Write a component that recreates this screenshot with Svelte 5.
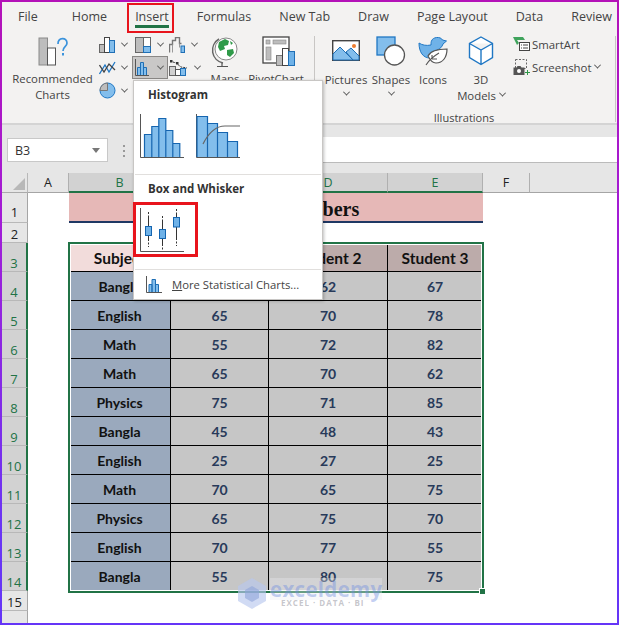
<script>
	const tabs = ['File', 'Home', 'Insert', 'Formulas', 'New Tab', 'Draw', 'Page Layout', 'Data', 'Review'];
	const columns = ['A', 'B', 'C', 'D', 'E', 'F'];
	const students = ['Student 1', 'Student 2', 'Student 3'];
	const marks = [
		['Bangla', 48, 62, 67],
		['English', 65, 70, 78],
		['Math', 55, 72, 82],
		['Math', 65, 70, 62],
		['Physics', 75, 71, 85],
		['Bangla', 45, 48, 43],
		['English', 25, 27, 25],
		['Math', 70, 65, 75],
		['Physics', 65, 75, 70],
		['English', 70, 77, 55],
		['Bangla', 55, 80, 75]
	];
</script>

<div class="frame">
	<nav class="tabs">
		{#each tabs as tab}
			<span class="tab" class:active={tab === 'Insert'}>{tab}</span>
		{/each}
	</nav>

	<section class="ribbon">
		<div class="big recommended">
			<svg width="32" height="30" viewBox="0 0 32 30">
				<rect x="1" y="1" width="8.5" height="27" fill="#bdbdbd" stroke="#8a8a8a" />
				<rect x="9.5" y="11" width="8" height="17" fill="#fff" stroke="#555" />
				<path d="M20 7c0-7 9-7 9-1 0 4-4 3.500-4 8" fill="none" stroke="#3b93dc" stroke-width="1.700" />
				<rect x="24" y="16" width="2" height="2.500" fill="#3b93dc" />
			</svg>
			<span class="label first">Recommended<br />Charts</span>
		</div>

		<div class="chart-grid">
			<div class="cell">
				<svg width="17" height="16" viewBox="0 0 17 16">
					<rect x="0.500" y="7.500" width="5" height="8" fill="#bdbdbd" stroke="#666" />
					<rect x="5.500" y="0.500" width="5" height="15" fill="#fff" stroke="#444" />
					<rect x="10.500" y="3.500" width="5" height="12" fill="#83beec" stroke="#1f6fb5" />
				</svg>
				<i class="chev"></i>
			</div>
			<div class="cell mid">
				<svg width="17" height="16" viewBox="0 0 17 16">
					<rect x="0.500" y="0.500" width="8" height="15" fill="#bdbdbd" stroke="#666" />
					<rect x="8.500" y="0.500" width="7" height="9" fill="#fff" stroke="#666" />
					<rect x="8.500" y="9.500" width="7" height="6" fill="#83beec" stroke="#1f6fb5" />
				</svg>
				<i class="chev"></i>
			</div>
			<div class="cell">
				<svg width="17" height="16" viewBox="0 0 17 16">
					<path d="M0.500 15.500v-8h3v-4h3v-3h4v6h2" fill="none" stroke="#777" stroke-width="1.400" />
					<path d="M3.500 15.500v-8M10.500 6.500v4" fill="none" stroke="#999" />
					<rect x="12" y="9" width="3.500" height="6.500" fill="#83beec" stroke="#1f6fb5" />
				</svg>
				<i class="chev"></i>
			</div>
			<div class="cell">
				<svg width="17" height="16" viewBox="0 0 17 16">
					<path d="M0.500 14 6 5l4 7 6-10" fill="none" stroke="#1f77c4" stroke-width="1.300" />
					<path d="M0.500 5 5 12l5-8 6 6" fill="none" stroke="#444" stroke-width="1.300" />
				</svg>
				<i class="chev"></i>
			</div>
			<div class="cell hover">
				<svg width="14" height="17" viewBox="0 0 14 17">
					<path d="M0.500 0v16.500H14" fill="none" stroke="#555" />
					<path d="M2.500 16V8.500h3V16M5.500 16V3.500h3V16M8.500 16V8.500h3V16" fill="#83beec" stroke="#1f6fb5" />
				</svg>
				<i class="chev"></i>
			</div>
			<div class="cell">
				<svg width="20" height="17" viewBox="0 0 20 17">
					<path d="M1 2l6 2 5 4 6 1" fill="none" stroke="#333" stroke-dasharray="2 1" />
					<rect x="1" y="1" width="2.500" height="2.500" fill="#333" />
					<rect x="7" y="3" width="2.500" height="2.500" fill="#333" />
					<rect x="0.500" y="7.500" width="6" height="9" fill="#d0d0d0" stroke="#666" />
					<rect x="6.500" y="10.500" width="5" height="6" fill="#fff" stroke="#555" />
					<rect x="11.500" y="9.500" width="5" height="7" fill="#83beec" stroke="#1f6fb5" />
				</svg>
				<i class="chev"></i>
			</div>
			<div class="cell">
				<svg width="17" height="17" viewBox="0 0 17 17">
					<circle cx="8.500" cy="8.500" r="7.500" fill="#83beec" stroke="#1f77c4" />
					<path d="M8.500 8.500V1A7.500 7.500 0 0 0 1 8.500z" fill="#bdbdbd" stroke="#777" />
				</svg>
				<i class="chev"></i>
			</div>
		</div>

		<div class="big maps">
			<svg width="28" height="31" viewBox="0 0 28 31">
				<path d="M8 3a13 13 0 0 0 4 24" fill="none" stroke="#666" stroke-width="1.500" />
				<path d="M11 27v3M6 30.500h11" stroke="#555" fill="none" stroke-width="1.200" />
				<circle cx="15" cy="13" r="11" fill="#fff" stroke="#888" />
				<path d="M8 6l6-3 4 2-1 4-4 1 1 3-5 2-2-4zM16 14l6-1 1 4-4 4-3-2zM19 5l3 2-2 2z" fill="#2f9a49" />
			</svg>
			<span class="label">Maps</span>
		</div>

		<div class="big pivot">
			<svg width="36" height="31" viewBox="0 0 36 31">
				<rect x="1" y="1" width="26" height="26" fill="#fff" stroke="#444" stroke-width="1.300" />
				<rect x="4" y="4" width="4" height="4" fill="#bdbdbd" stroke="#888" stroke-width="0.600" />
				<rect x="11" y="4" width="13" height="4" fill="#bdbdbd" stroke="#888" stroke-width="0.600" />
				<rect x="4" y="11" width="5" height="13" fill="#bdbdbd" stroke="#888" stroke-width="0.600" />
				<rect x="14.500" y="19.500" width="6" height="10" fill="#bdbdbd" stroke="#777" />
				<rect x="20.500" y="12.500" width="6" height="17" fill="#fff" stroke="#444" />
				<rect x="26.500" y="15.500" width="6" height="14" fill="#6fb2e8" stroke="#1f6fb5" />
			</svg>
			<span class="label">PivotChart</span>
		</div>

		<div class="sep"></div>

		<div class="illustrations">
			<div class="items">
				<div class="big pictures">
					<svg width="28" height="21" viewBox="0 0 28 21">
						<rect x="0.700" y="0.700" width="26.600" height="19.600" fill="#fff" stroke="#444" stroke-width="1.400" />
						<path d="M1 20V14l7-7 13 13z" fill="#83beec" stroke="#1f6fb5" />
						<path d="M14 12l5-4 8 8v4h-6z" fill="#83beec" stroke="#1f6fb5" />
						<circle cx="22" cy="6" r="2" fill="#ed7d31" />
					</svg>
					<span class="label">Pictures</span>
					<i class="chev"></i>
				</div>
				<div class="big shapes">
					<svg width="30" height="30" viewBox="0 0 30 30">
						<rect x="1" y="1" width="18" height="18" fill="#83beec" stroke="#1f77c4" stroke-width="1.300" />
						<circle cx="18.500" cy="19" r="10" fill="#fff" stroke="#555" stroke-width="1.300" />
					</svg>
					<span class="label">Shapes</span>
					<i class="chev"></i>
				</div>
				<div class="big icons">
					<svg width="30" height="30" viewBox="0 0 30 30">
						<path d="M1 7c3 2 7 3 12 2 0-2 0-3 .5-4 1-4 9-5 11-1l4 1-3.500 3c-1 3-3 5-6 6L12 22C5 22 1 16 1 7z" fill="#6fb2e8" stroke="#1f77c4" />
						<path d="M10 20c2-4 8-7 19-7 0 8-4 14-11 14-3 0-6-3-8-7z" fill="#fff" stroke="#555" stroke-width="1.200" />
						<path d="M8 29c3-5 8-9 13-12M14 23v-4M14 23h5" fill="none" stroke="#555" stroke-width="1.100" />
					</svg>
					<span class="label">Icons</span>
				</div>
				<div class="big models">
					<svg width="26" height="30" viewBox="0 0 26 30">
						<path d="M13 1l11.500 6.500v14L13 28.500 1.500 21.500v-14zM1.500 7.500 13 14l11.500-6.500M13 14v14.500" fill="#fff" stroke="#1f77c4" stroke-width="1.400" />
					</svg>
					<span class="label">3D<br />Models <i class="chev inline"></i></span>
				</div>
				<div class="stack">
					<div class="line">
						<svg width="17" height="14" viewBox="0 0 17 14">
							<path d="M0 0h10l2 3H4l2 3-2 2z" fill="#3fa35c" />
							<rect x="6.500" y="5.500" width="10" height="8" fill="#fff" stroke="#444" />
							<path d="M8 8h1M10 8h5M8 11h1M10 11h5" stroke="#444" />
						</svg>
						<span>SmartArt</span>
					</div>
					<div class="line">
						<svg width="17" height="17" viewBox="0 0 17 17">
							<rect x="2.500" y="0.500" width="11" height="9" fill="none" stroke="#666" stroke-dasharray="2 1.500" />
							<path d="M0.500 8.500h3l1-1.500h3l1 1.500h3v7.500h-11z" fill="#555" />
							<circle cx="6" cy="12" r="2" fill="#fff" />
							<path d="M14.500 11v5M12 13.500h5" stroke="#2f9a49" />
						</svg>
						<span>Screenshot <i class="chev inline"></i></span>
					</div>
				</div>
			</div>
			<span class="group-name">Illustrations</span>
		</div>

		<div class="sep last"></div>
	</section>

	<section class="formula">
		<div class="name-box">
			<span>B3</span>
			<i class="caret"></i>
		</div>
		<div class="dots"><i></i><i></i><i></i></div>
		<div class="input"></div>
	</section>

	<section class="sheet">
		<div class="corner"><i></i></div>
		{#each columns as col}
			<div class="col-head" class:picked={col !== 'A' && col !== 'F'}>{col}</div>
		{/each}
		<div class="col-head rest"></div>

		<div class="row-head top">1</div>
		<div class="blank"></div>
		<div class="title">Students’ Numbers</div>
		<div class="blank wide"></div>

		<div class="row-head">2</div>
		<div class="blank full"></div>

		<div class="row-head picked">3</div>
		<div class="blank"></div>
		<div class="cell-h subject">Subject</div>
		{#each students as s}
			<div class="cell-h student">{s}</div>
		{/each}
		<div class="blank wide"></div>

		{#each marks as row, i}
			<div class="row-head picked">{i + 4}</div>
			<div class="blank"></div>
			<div class="cell-d name">{row[0]}</div>
			<div class="cell-d">{row[1]}</div>
			<div class="cell-d">{row[2]}</div>
			<div class="cell-d">{row[3]}</div>
			<div class="blank wide"></div>
		{/each}

		<div class="row-head">15</div>
		<div class="blank full"></div>
		<div class="row-head tail"></div>
		<div class="blank full"></div>

		<div class="selection"><i></i></div>
	</section>

	<div class="popup">
		<h4>Histogram</h4>
		<div class="thumbs">
			<svg width="45" height="45" viewBox="0 0 45 45">
				<path d="M0.500 0v43.500H44" fill="none" stroke="#555" />
				<path d="M4.500 43V20.500h7.300V43M11.800 43V12.500h7V43M18.800 43V4.500h7V43M25.800 43V16.500h7V43M32.800 43V29.500h7V43" fill="#83beec" stroke="#1565b0" stroke-width="1.200" />
			</svg>
			<svg width="45" height="45" viewBox="0 0 45 45">
				<path d="M0.500 0v43.500H44" fill="none" stroke="#555" />
				<path d="M1 43V2.500h10.500V43M11.500 43V9.500h10V43M21.500 43V18.500h10V43M31.500 43V27.500h10V43" fill="#83beec" stroke="#1565b0" stroke-width="1.200" />
				<path d="M7 30c5-10 12-18 22-18h15" fill="none" stroke="#666" stroke-width="1.200" />
			</svg>
		</div>
		<hr />
		<h4>Box and Whisker</h4>
		<div class="whisker">
			<svg width="45" height="45" viewBox="0 0 45 45">
				<path d="M0.500 0v43.500H44" fill="none" stroke="#555" />
				<g fill="none" stroke="#333">
					<path d="M8.500 4v5M22.500 8v5M36.500 1v4" stroke-dasharray="2 1.500" />
					<path d="M8.500 9v9M8.500 27v4M22.500 13v8M22.500 30v6M36.500 5v4M36.500 19v11" />
					<path d="M8.500 31v8M22.500 36v7M36.500 30v8" stroke-dasharray="2 1.500" />
				</g>
				<g fill="#6fb2e8" stroke="#1565b0">
					<rect x="5.500" y="18.500" width="6" height="9" />
					<rect x="19.500" y="21.500" width="6" height="9" />
					<rect x="33.500" y="9.500" width="6" height="9.500" />
				</g>
			</svg>
		</div>
		<hr class="lower" />
		<div class="more">
			<svg width="16" height="17" viewBox="0 0 16 17">
				<path d="M0.500 0v16.500H16" fill="none" stroke="#555" />
				<path d="M3 16V8.500h3V16M6 16V3.500h3.500V16M9.500 16V8.500h3V16" fill="#83beec" stroke="#1f6fb5" />
			</svg>
			<span><u>M</u>ore Statistical Charts...</span>
		</div>
	</div>

	<div class="watermark">
		<svg width="28" height="31" viewBox="0 0 28 31">
			<path d="M14 0l14 8v15l-14 8-14-8V8z" fill="#b8c8ee" opacity="0.650" />
			<path d="M14 8l7 4v8l-7 4-7-4v-8z" fill="#8da4d8" opacity="0.600" />
		</svg>
		<div class="wm-text">
			<span class="wm-name">exceldemy</span>
			<span class="wm-sub">EXCEL · DATA · BI</span>
		</div>
	</div>
</div>

<style>
	:global(body) {
		margin: 0;
	}

	.frame {
		position: relative;
		width: 619px;
		height: 625px;
		box-sizing: border-box;
		border: 2px solid;
		border-image: linear-gradient(180deg, #b412b8 0%, #a31cd6 35%, #6a35f5 85%, #6535f7 100%) 1;
		background: #fff;
		overflow: hidden;
		display: flex;
		flex-direction: column;
		font-family: 'Open Sans', 'Liberation Sans', sans-serif;
		color: #444;
	}

	.tabs {
		position: relative;
		z-index: 1;
		display: flex;
		gap: 28px;
		height: 28px;
		padding: 0 0 0 16px;
		background: #f3f2f1;
		align-items: center;
		font-size: 12.500px;
		flex: none;
	}

	.tab {
		position: relative;
		color: #444;
		white-space: nowrap;
	}

	.tab:first-child {
		margin-right: 6px;
	}

	.tab.active::before {
		content: '';
		position: absolute;
		left: -8px;
		right: -5px;
		top: -5px;
		bottom: -8px;
		border: 2.500px solid #e8141c;
	}

	.tab.active::after {
		content: '';
		position: absolute;
		left: 0;
		right: 0;
		bottom: -3px;
		height: 2.500px;
		background: #217346;
	}

	.ribbon {
		display: flex;
		height: 95px;
		flex: none;
		box-sizing: border-box;
		background: #f3f2f1;
		border-bottom: 2px solid #d4d4d4;
		font-size: 11.400px;
		padding-top: 6px;
	}

	.big {
		display: flex;
		flex-direction: column;
		align-items: center;
		flex: none;
	}

	.label {
		display: block;
		text-align: center;
		line-height: 16px;
		white-space: nowrap;
	}

	.recommended {
		width: 85px;
		margin-left: 8px;
	}

	.recommended svg {
		margin: 1px 0 4px 3px;
	}

	.chart-grid {
		display: grid;
		grid-template-columns: 34px 36px 36px;
		grid-auto-rows: 23px;
		margin: -3px 0 0 3px;
		flex: none;
	}

	.cell {
		display: flex;
		align-items: center;
		gap: 4px;
		padding-left: 1px;
		height: 23px;
		box-sizing: border-box;
	}

	.cell.mid {
		padding-left: 3px;
	}

	.cell.hover {
		background: #c9c8c7;
		border: 1px solid #8a8886;
		padding-left: 2px;
		gap: 7px;
	}

	.chev {
		display: inline-block;
		width: 4px;
		height: 4px;
		border-right: 1.200px solid #555;
		border-bottom: 1.200px solid #555;
		transform: rotate(45deg) translate(-1px, -1px);
		margin-left: 2px;
		flex: none;
	}

	.chev.inline {
		vertical-align: 3px;
		margin-left: 1px;
	}

	.maps {
		width: 36px;
		margin-left: 3px;
	}

	.maps svg,
	.pivot svg {
		margin-bottom: 4px;
		flex: none;
	}

	.pivot {
		width: 56px;
		margin-left: 5px;
	}

	.pivot svg {
		margin-left: 8px;
	}

	.sep {
		width: 1px;
		height: 86px;
		background: #c8c6c4;
		margin-left: 10px;
		flex: none;
	}

	.sep.last {
		margin-left: 1px;
	}

	.illustrations {
		display: flex;
		flex-direction: column;
		width: 288px;
		flex: none;
		margin-left: 11px;
	}

	.items {
		display: flex;
		height: 75px;
		flex: none;
	}

	.pictures {
		width: 40px;
	}

	.pictures svg {
		margin: 4px 0 11px;
	}

	.pictures .chev,
	.shapes .chev {
		margin: 3px 0 0;
	}

	.shapes {
		width: 38px;
		margin-left: 6px;
	}

	.shapes svg,
	.icons svg,
	.models svg {
		margin-bottom: 6px;
	}

	.icons {
		width: 32px;
		margin-left: 7px;
	}

	.models {
		width: 50px;
		margin-left: 7px;
	}

	.stack {
		display: flex;
		flex-direction: column;
		gap: 7px;
		margin-left: 7px;
	}

	.line {
		display: flex;
		align-items: center;
		gap: 2px;
		height: 16px;
		white-space: nowrap;
	}

	.group-name {
		text-align: center;
		font-size: 11px;
		line-height: 14px;
		width: 276px;
	}

	.formula {
		height: 38px;
		background: #e6e6e6;
		display: flex;
		flex: none;
		padding: 13px 0 0 5px;
		box-sizing: border-box;
	}

	.name-box {
		width: 101px;
		height: 24px;
		box-sizing: border-box;
		background: #fff;
		border: 1px solid #c8c8c8;
		display: flex;
		align-items: center;
		justify-content: space-between;
		padding: 0 7px;
		font-size: 12.500px;
		color: #333;
	}

	.caret {
		width: 0;
		height: 0;
		border: 4px solid transparent;
		border-top: 5px solid #777;
		border-bottom: 0;
	}

	.dots {
		display: flex;
		flex-direction: column;
		gap: 3px;
		margin: 7px 0 0 15px;
		width: 2px;
	}

	.dots i {
		width: 2px;
		height: 2px;
		background: #999;
	}

	.input {
		flex: 1;
		background: #fff;
		margin: -1px 0 0 8px;
		border-bottom: 1px solid #bbb;
	}

	.sheet {
		flex: 1;
		background: #e6e6e6;
		padding-top: 10px;
		display: grid;
		position: relative;
		grid-template-columns: 26px 41px 102px 98px 119px 95px 47px 1fr;
		grid-template-rows: 20px 30px 20px repeat(12, 29px) 20px 1fr;
		font-family: Lato, 'Open Sans', sans-serif;
	}

	.corner {
		display: flex;
		justify-content: flex-end;
		align-items: flex-end;
		padding: 0 2px 2px 0;
		border-right: 1px solid #b8b8b8;
		border-bottom: 1px solid #aaa;
		box-sizing: border-box;
	}

	.corner i {
		width: 0;
		height: 0;
		border-left: 12px solid transparent;
		border-bottom: 12px solid #b8b8b8;
	}

	.col-head {
		background: #e6e6e6;
		display: flex;
		align-items: center;
		justify-content: center;
		font: 12.500px 'Open Sans', sans-serif;
		color: #222;
		border-right: 1px solid #b0b0b0;
		border-bottom: 1px solid #a5a5a5;
		box-sizing: border-box;
	}

	.col-head.picked {
		background: #d2d2d2;
		color: #217346;
		border-bottom: 2px solid #217346;
	}

	.col-head.rest {
		border-right: 0;
		border-bottom: 1px solid #a5a5a5;
		background: #e6e6e6;
	}

	.row-head {
		background: #e6e6e6;
		display: flex;
		align-items: flex-end;
		justify-content: center;
		font: 13px 'Open Sans', sans-serif;
		color: #222;
		border-right: 1px solid #a5a5a5;
		border-bottom: 1px solid #b8b8b8;
		box-sizing: border-box;
		line-height: 15px;
	}

	.row-head.top {
		padding-bottom: 2px;
	}

	.row-head.picked {
		background: #d2d2d2;
		color: #217346;
		border-right: 2px solid #217346;
	}

	.row-head.tail {
		border-bottom: 0;
	}

	.blank {
		background: #fff;
	}

	.blank.wide {
		grid-column: span 2;
	}

	.blank.full {
		grid-column: span 7;
	}

	.title {
		grid-column: span 4;
		background: #e6b8b7;
		border-bottom: 2px solid #1f3864;
		box-sizing: border-box;
		display: flex;
		align-items: center;
		justify-content: center;
		padding: 4px 0 0 3px;
		font: bold 20px 'Liberation Serif', serif;
		color: #111;
		white-space: nowrap;
	}

	.cell-h,
	.cell-d {
		display: flex;
		align-items: center;
		justify-content: center;
		padding-top: 1px;
		border-right: 1px solid #000;
		border-bottom: 1px solid #000;
		box-sizing: border-box;
		font-weight: 700;
		font-size: 14px;
	}

	.cell-h {
		font-size: 15.500px;
		color: #111;
	}

	.subject {
		background: #f2dcdb;
	}

	.student {
		background: #bcabaa;
	}

	.cell-d {
		background: #c6c6c6;
		color: #283a5a;
	}

	.cell-d.name {
		background: #9aa9bd;
		color: #111;
	}

	/* out of flow, so the grid's auto placement keeps the cells under it */
	.selection {
		grid-column: 3 / 7;
		grid-row: 4 / 16;
		position: absolute;
		left: -1px;
		right: -1px;
		top: -1px;
		bottom: -2px;
		border: 2px solid #217346;
		box-shadow: inset 0 0 0 1px #fff;
		pointer-events: none;
	}

	.selection i {
		position: absolute;
		right: -4px;
		bottom: -4px;
		width: 5px;
		height: 5px;
		background: #217346;
		border: 1px solid #fff;
	}

	.popup {
		position: absolute;
		z-index: 1;
		left: 131px;
		top: 78px;
		width: 190px;
		height: 220px;
		box-sizing: border-box;
		background: #fff;
		border: 1px solid #c8c6c4;
		box-shadow: 1px 1px 3px rgba(0, 0, 0, 0.25);
		display: flex;
		flex-direction: column;
	}

	h4 {
		margin: 0;
		padding-left: 14px;
		font-size: 11.500px;
		font-weight: 700;
		line-height: 16px;
		color: #333;
	}

	.popup > h4:first-child {
		margin-top: 6px;
	}

	.thumbs {
		display: flex;
		gap: 11px;
		padding: 11px 0 0 6px;
		height: 45px;
		flex: none;
	}

	hr {
		border: 0;
		border-top: 1px solid #e1dfdd;
		margin: 15px 1px 6px;
		width: 186px;
	}

	.whisker {
		width: 65px;
		height: 55px;
		box-sizing: border-box;
		border: 3px solid #e8141c;
		margin: 5px 0 0 -1px;
		padding: 3px 0 0 4px;
		flex: none;
	}

	.whisker svg {
		display: block;
	}

	hr.lower {
		margin: 12px 1px 0;
	}

	.more {
		display: flex;
		align-items: center;
		gap: 10px;
		padding: 6px 0 0 12px;
		font-size: 11.300px;
		white-space: nowrap;
		color: #444;
	}

	.watermark {
		position: absolute;
		z-index: 1;
		left: 236px;
		top: 576px;
		display: flex;
		gap: 4px;
		pointer-events: none;
	}

	.wm-text {
		display: flex;
		flex-direction: column;
		background: linear-gradient(rgba(235, 235, 240, 0.35) 22px, transparent 22px);
	}

	.wm-name {
		font: 700 20.500px/22px 'Open Sans', sans-serif;
		color: rgba(110, 140, 225, 0.42);
		letter-spacing: 0.300px;
	}

	.wm-sub {
		font: 700 8px/10px 'Open Sans', sans-serif;
		letter-spacing: 1px;
		color: rgba(150, 150, 160, 0.55);
		padding-left: 11px;
		margin-top: -2px;
	}
</style>
